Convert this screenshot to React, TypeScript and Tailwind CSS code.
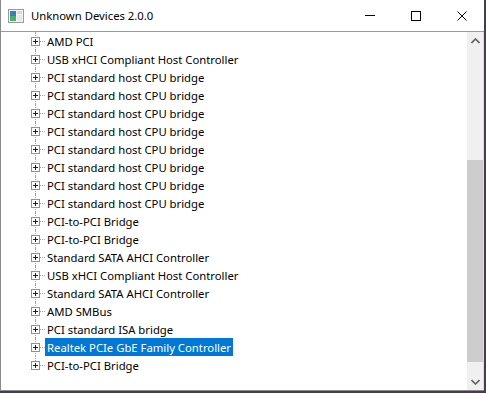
import React from "react";

const items = [
  "AMD PCI",
  "USB xHCI Compliant Host Controller",
  "PCI standard host CPU bridge",
  "PCI standard host CPU bridge",
  "PCI standard host CPU bridge",
  "PCI standard host CPU bridge",
  "PCI standard host CPU bridge",
  "PCI standard host CPU bridge",
  "PCI standard host CPU bridge",
  "PCI standard host CPU bridge",
  "PCI-to-PCI Bridge",
  "PCI-to-PCI Bridge",
  "Standard SATA AHCI Controller",
  "USB xHCI Compliant Host Controller",
  "Standard SATA AHCI Controller",
  "AMD SMBus",
  "PCI standard ISA bridge",
  "Realtek PCIe GbE Family Controller",
  "PCI-to-PCI Bridge",
];

function Row({ label, last, selected }: { label: string; last: boolean; selected: boolean }) {
  return (
    <div className="flex h-[18px] items-center">
      <div className="relative h-full w-[44px] shrink-0">
        <div
          className={`absolute left-[34px] top-0 w-0 border-l border-dotted border-[#a0a0a0] ${
            last ? "h-[9px]" : "h-[18px]"
          }`}
        />
        <div className="absolute left-[35px] top-[9px] h-0 w-[9px] border-t border-dotted border-[#a0a0a0]" />
        <div className="absolute left-[30px] top-[5px] flex h-[9px] w-[9px] items-center justify-center border border-[#919191] bg-white">
          <div className="relative h-[5px] w-[5px]">
            <div className="absolute left-0 top-[2px] h-[1px] w-[5px] bg-[#1a1a3a]" />
            <div className="absolute left-[2px] top-0 h-[5px] w-[1px] bg-[#1a1a3a]" />
          </div>
        </div>
      </div>
      <div
        className={`flex h-[18px] items-center whitespace-nowrap px-[2px] pt-[2px] ${
          selected ? "bg-[#0078d7] text-white" : "text-black"
        }`}
      >
        {label}
      </div>
    </div>
  );
}

export default function App() {
  return (
    <div
      className="h-[393px] w-[486px] overflow-hidden bg-[#4a3a4e]"
      style={{ fontFamily: '"Segoe UI", "Noto Sans", sans-serif' }}
    >
      <div className="flex h-[391px] w-[484px] flex-col border-l border-[#8a8a8a] bg-white">
        {/* Title bar */}
        <div className="flex h-[31px] shrink-0 items-center bg-white">
          <div className="ml-[7px] mr-[7px]">
            <svg width="16" height="16" viewBox="0 0 16 16">
              <rect x="0.5" y="1.5" width="15" height="13" fill="#f4f4f4" stroke="#9a9a9a" />
              <rect x="2" y="3" width="6" height="10" fill="#3a7dbf" />
              <rect x="2" y="8" width="6" height="5" fill="#4caf6a" />
              <rect x="9" y="3" width="5" height="3" fill="#d8d8d8" />
              <rect x="9" y="7" width="5" height="6" fill="#e8e8e8" />
            </svg>
          </div>
          <div className="pt-[2px] text-[11.3px] text-black">Unknown Devices 2.0.0</div>
          <div className="ml-auto flex h-full">
            <div className="flex h-full w-[46px] items-center justify-center">
              <div className="h-[1px] w-[10px] bg-black" />
            </div>
            <div className="flex h-full w-[46px] items-center justify-center">
              <div className="h-[10px] w-[10px] border border-black" />
            </div>
            <div className="flex h-full w-[45px] items-center justify-center">
              <svg width="10" height="10" viewBox="0 0 10 10">
                <path d="M0.5 0.5 L9.5 9.5 M9.5 0.5 L0.5 9.5" stroke="#000" strokeWidth="1" />
              </svg>
            </div>
          </div>
        </div>
        <div className="h-[1px] shrink-0 bg-[#9a9a9a]" />
        {/* Body */}
        <div className="flex min-h-0 flex-1">
          <div className="flex-1 overflow-hidden text-[11.3px] leading-none">
            {items.map((it, i) => (
              <Row key={i} label={it} last={i === items.length - 1} selected={i === 17} />
            ))}
          </div>
          <div className="flex w-[16px] shrink-0 flex-col bg-[#f0f0f0]">
            <div className="flex h-[17px] items-center justify-center">
              <svg width="9" height="6" viewBox="0 0 9 6">
                <path d="M0.5 5 L4.5 1 L8.5 5" stroke="#606060" strokeWidth="1.6" fill="none" />
              </svg>
            </div>
            <div className="h-[111px]" />
            <div className="h-[202px] bg-[#cdcdcd]" />
            <div className="flex-1" />
            <div className="flex h-[17px] items-center justify-center">
              <svg width="9" height="6" viewBox="0 0 9 6">
                <path d="M0.5 1 L4.5 5 L8.5 1" stroke="#606060" strokeWidth="1.6" fill="none" />
              </svg>
            </div>
          </div>
          <div className="w-[1px] shrink-0 bg-[#dcdcdc]" />
        </div>
        <div className="h-[1px] shrink-0 bg-[#8a8a8a]" />
      </div>
    </div>
  );
}
